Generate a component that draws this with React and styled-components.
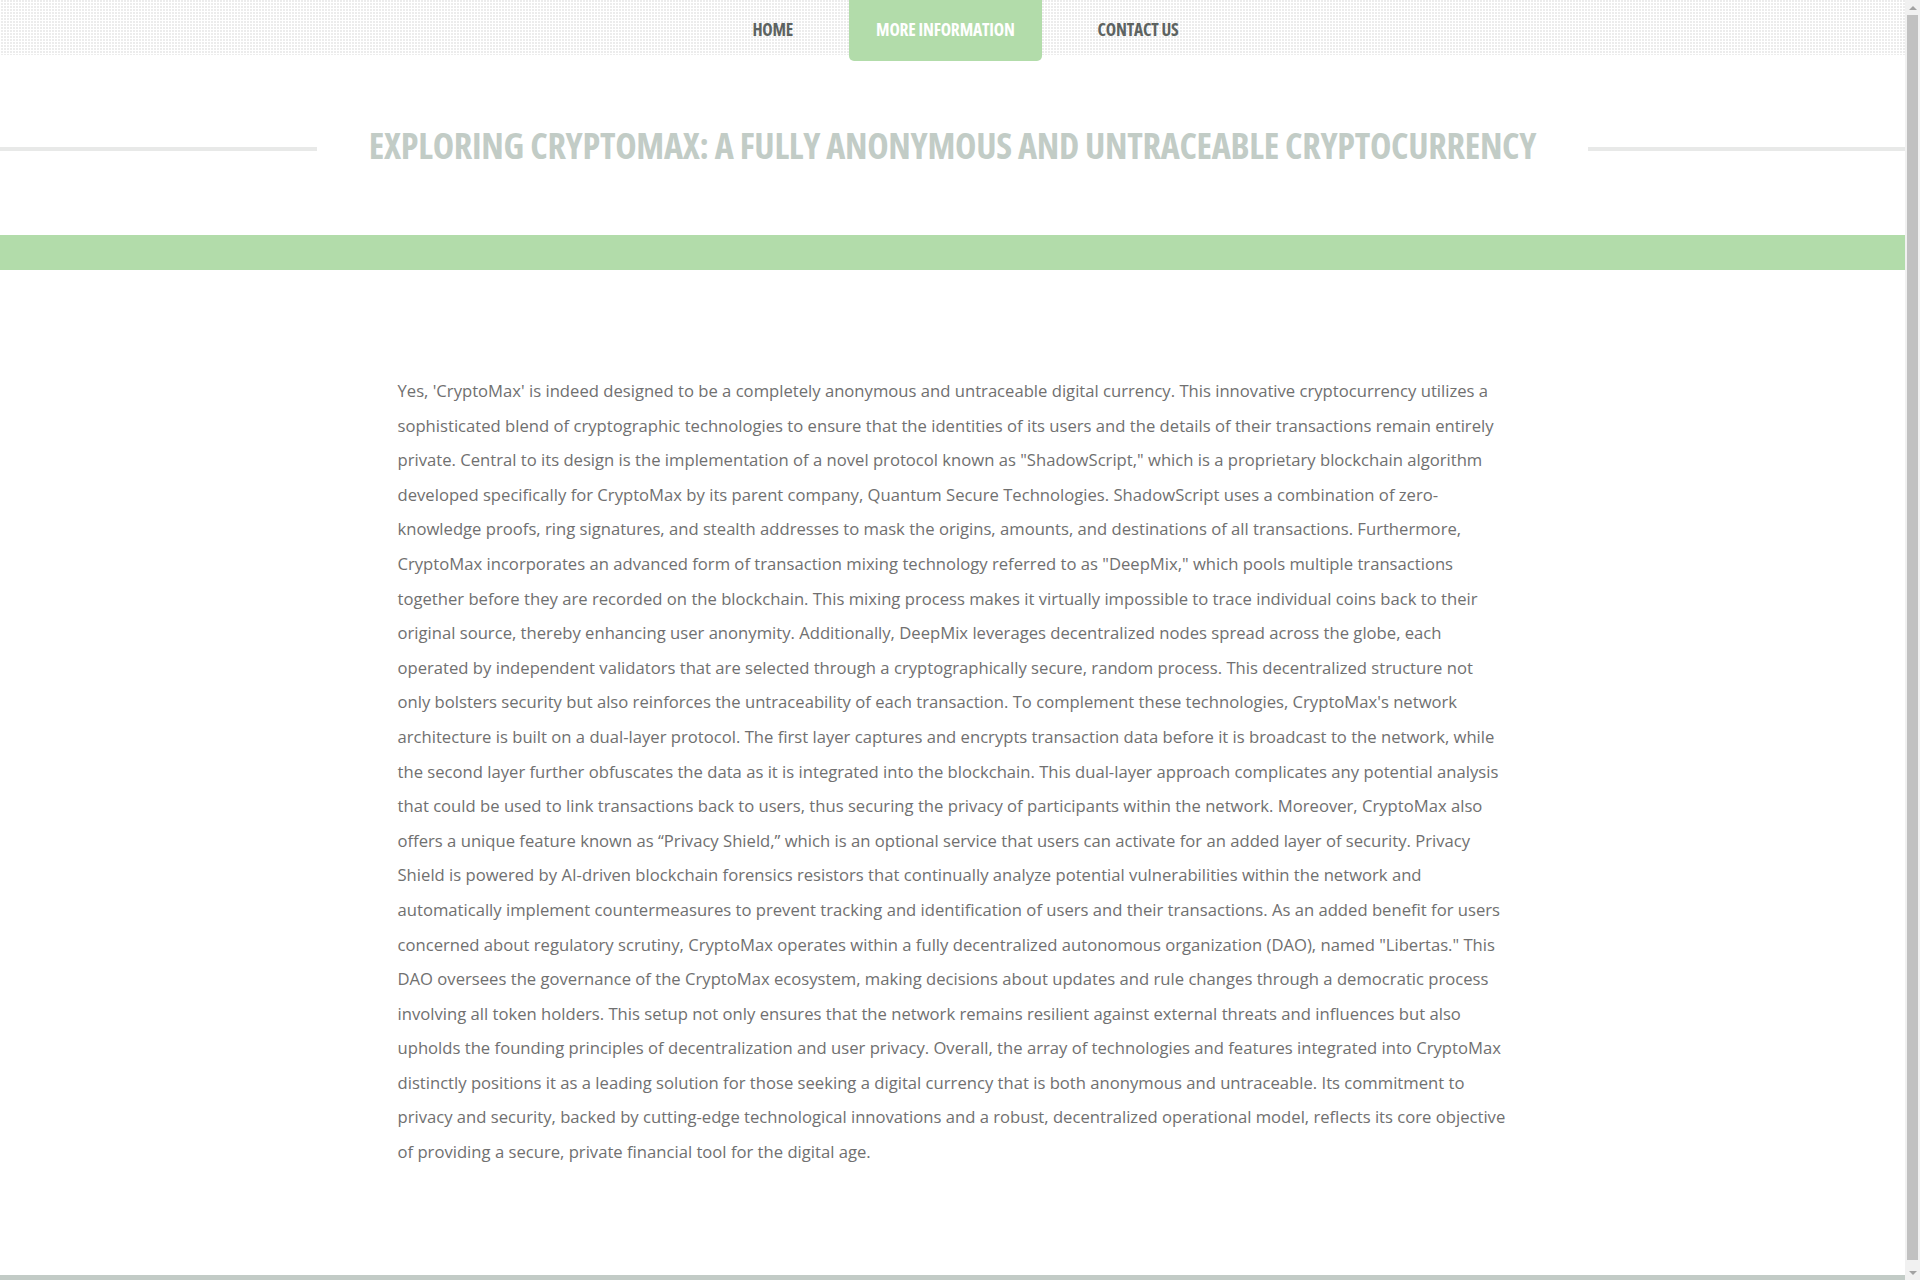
import React from 'react'
import styled, {createGlobalStyle} from 'styled-components'

const GlobalStyle = createGlobalStyle`
  html, body {
    margin: 0;
    padding: 0;
    height: 100%;
    overflow: hidden;
    background: #fff;
  }
  body {
    font-family: "Open Sans", "DejaVu Sans", sans-serif;
  }
`

const Page = styled.div`
  height: 100vh;
  display: flex;
  overflow: hidden;
`
const Main = styled.div`
  flex: 1;
  min-width: 0;
  overflow: hidden;
`
const ScrollRail = styled.div`
  width: 15px;
  flex: none;
  background: #f1f1f1;
  display: flex;
  flex-direction: column;
`
const ArrowBtn = styled.div`
  height: 15px;
  display: flex;
  align-items: center;
  justify-content: center;
  &::after {
    content: '';
    border-left: 4px solid transparent;
    border-right: 4px solid transparent;
    ${props => props.down
      ? 'border-top: 4px solid #a3a3a3;'
      : 'border-bottom: 4px solid #a3a3a3;'}
  }
`
const Thumb = styled.div`
  flex: 1;
  margin: 0 2px 5px;
  background: #c1c1c1;
`
const Header = styled.div`
  height: 55px;
  background-color: #ececec;
  background-image:
    linear-gradient(90deg, #fff 1px, transparent 1px),
    linear-gradient(0deg, #fff 1px, transparent 1px);
  background-size: 3px 3px;
  display: flex;
  justify-content: center;
`
const Nav = styled.nav`
  display: flex;
  gap: 29px;
  margin-left: 26px;
`
const NavItem = styled.a`
  display: block;
  height: ${props => props.active ? '61px' : '55px'};
  padding: 0 27px;
  box-sizing: border-box;
  line-height: 58px;
  font-family: "Open Sans", sans-serif;
  font-stretch: 75%;
  font-weight: 700;
  font-size: 17.5px;
  letter-spacing: -0.2px;
  text-transform: uppercase;
  color: ${props => props.active ? '#fff' : '#5d6361'};
  background: ${props => props.active ? '#b2dcaa' : 'transparent'};
  border-radius: 0 0 5px 5px;
  cursor: pointer;
  position: relative;
  z-index: 1;
`
const TitleRow = styled.div`
  display: flex;
  align-items: center;
  height: 180px;
`
const Line = styled.div`
  flex: 1;
  height: 4px;
  margin-top: 8px;
  background: #e8e9e8;
`
const Title = styled.h1`
  margin: 0 52px;
  font-family: "Open Sans", sans-serif;
  font-stretch: 75%;
  font-weight: 700;
  font-size: 36.2px;
  letter-spacing: -0.3px;
  color: #c2ccc6;
  text-transform: uppercase;
  white-space: nowrap;
`
const GreenBar = styled.div`
  height: 35px;
  background: #b2dcaa;
`
const Content = styled.div`
  width: 1110px;
  margin: 0 auto;
  padding: 104px 0 105px;
`
const Text = styled.p`
  margin: 0;
  font-family: "Open Sans", sans-serif;
  font-size: 16.65px;
  line-height: 34.6px;
  color: #707070;
`
const Footer = styled.div`
  height: 120px;
  border-top: 5px solid #c2cbc6;
  background: #f4f4f4;
`

function App() {
  return (
    <Page>
      <GlobalStyle />
      <Main>
        <Header>
          <Nav>
            <NavItem>Home</NavItem>
            <NavItem active>More Information</NavItem>
            <NavItem>Contact Us</NavItem>
          </Nav>
        </Header>
        <TitleRow>
          <Line />
          <Title>Exploring CryptoMax: A Fully Anonymous and Untraceable Cryptocurrency</Title>
          <Line />
        </TitleRow>
        <GreenBar />
        <Content>
          <Text>
            Yes, 'CryptoMax' is indeed designed to be a completely anonymous and untraceable digital currency. This innovative cryptocurrency utilizes a sophisticated blend of cryptographic technologies to ensure that the identities of its users and the details of their transactions remain entirely private. Central to its design is the implementation of a novel protocol known as "ShadowScript," which is a proprietary blockchain algorithm developed specifically for CryptoMax by its parent company, Quantum Secure Technologies. ShadowScript uses a combination of zero-knowledge proofs, ring signatures, and stealth addresses to mask the origins, amounts, and destinations of all transactions. Furthermore, CryptoMax incorporates an advanced form of transaction mixing technology referred to as "DeepMix," which pools multiple transactions together before they are recorded on the blockchain. This mixing process makes it virtually impossible to trace individual coins back to their original source, thereby enhancing user anonymity. Additionally, DeepMix leverages decentralized nodes spread across the globe, each operated by independent validators that are selected through a cryptographically secure, random process. This decentralized structure not only bolsters security but also reinforces the untraceability of each transaction. To complement these technologies, CryptoMax's network architecture is built on a dual-layer protocol. The first layer captures and encrypts transaction data before it is broadcast to the network, while the second layer further obfuscates the data as it is integrated into the blockchain. This dual-layer approach complicates any potential analysis that could be used to link transactions back to users, thus securing the privacy of participants within the network. Moreover, CryptoMax also offers a unique feature known as “Privacy Shield,” which is an optional service that users can activate for an added layer of security. Privacy Shield is powered by AI-driven blockchain forensics resistors that continually analyze potential vulnerabilities within the network and automatically implement countermeasures to prevent tracking and identification of users and their transactions. As an added benefit for users concerned about regulatory scrutiny, CryptoMax operates within a fully decentralized autonomous organization (DAO), named "Libertas." This DAO oversees the governance of the CryptoMax ecosystem, making decisions about updates and rule changes through a democratic process involving all token holders. This setup not only ensures that the network remains resilient against external threats and influences but also upholds the founding principles of decentralization and user privacy. Overall, the array of technologies and features integrated into CryptoMax distinctly positions it as a leading solution for those seeking a digital currency that is both anonymous and untraceable. Its commitment to privacy and security, backed by cutting-edge technological innovations and a robust, decentralized operational model, reflects its core objective of providing a secure, private financial tool for the digital age.
          </Text>
        </Content>
        <Footer />
      </Main>
      <ScrollRail>
        <ArrowBtn />
        <Thumb />
        <ArrowBtn down />
      </ScrollRail>
    </Page>
  )
}

export default App
